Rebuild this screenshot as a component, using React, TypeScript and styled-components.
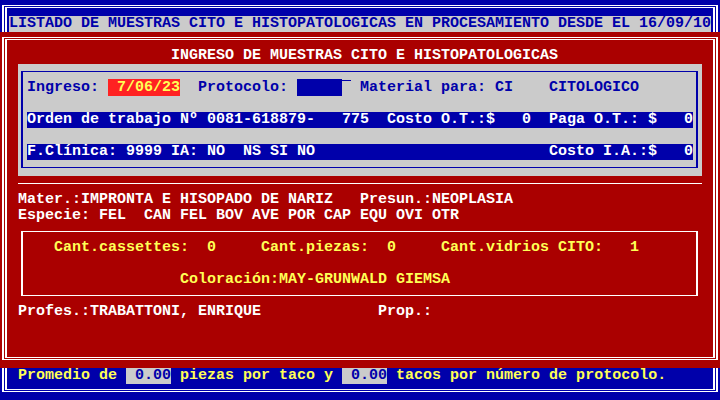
import React from 'react';
import styled, { createGlobalStyle, css } from 'styled-components';

const BLUE = '#0000aa';
const RED = '#aa0000';
const GRAY = '#cbcbcb';
const WHITE = '#ffffff';
const YELLOW = '#ffff55';
const BRIGHT_RED = '#ff2222';
const CELL = 9;

const Global = createGlobalStyle`
  html, body { margin: 0; padding: 0; background: ${BLUE}; }
  body { font-family: "Liberation Mono", "DejaVu Sans Mono", monospace; }
`;

const doubleFrame = css`
  &::before,
  &::after {
    content: '';
    position: absolute;
    pointer-events: none;
    border-style: solid;
    border-color: ${WHITE};
    border-width: 1px 2px;
  }
  &::before { left: 2px; top: 5px; right: 2px; bottom: 8px; }
  &::after { left: 5px; top: 7px; right: 5px; bottom: 10px; }
`;

const Screen = styled.div`
  position: relative;
  width: 720px;
  height: 400px;
  overflow: hidden;
  background: ${BLUE};
  display: flex;
  flex-direction: column;
  font-family: "Liberation Mono", "DejaVu Sans Mono", monospace;
  font-weight: bold;
  font-size: 15px;
  line-height: 16px;
  white-space: pre;
  ${doubleFrame}
`;

const TopBar = styled.header`
  height: 32px;
  flex-shrink: 0;
  box-sizing: border-box;
  padding: 16px 9px 0;
`;

const TitleStrip = styled.div`
  height: 16px;
  background: ${GRAY};
  color: ${BLUE};
`;

const Window = styled.section`
  position: relative;
  z-index: 1;
  height: 336px;
  flex-shrink: 0;
  box-sizing: border-box;
  padding: 16px 0;
  background: ${RED};
  display: flex;
  flex-direction: column;
  ${doubleFrame}
`;

const Row = styled.div<{ $indent?: number; $color?: string }>`
  height: 16px;
  flex-shrink: 0;
  padding-left: ${(p) => (p.$indent ?? 0) * CELL}px;
  color: ${(p) => p.$color ?? WHITE};
`;

const Panel = styled.div`
  height: 112px;
  flex-shrink: 0;
  box-sizing: border-box;
  margin: 0 18px;
  padding: 7px 4px 8px 3px;
  background: ${GRAY};
  display: flex;
`;

const LineBox = styled.div<{ $line: string }>`
  flex: 1;
  display: flex;
  flex-direction: column;
  border-style: solid;
  border-color: ${(p) => p.$line};
  border-width: 1px 2px;
  padding: 8px 3px 7px 4px;
`;

const WhiteBox = styled(LineBox)`
  flex: none;
  margin: 7px 22px 8px 21px;
`;

const Bar = styled.div`
  height: 16px;
  background: ${BLUE};
  color: ${WHITE};
`;

const Field = styled.span<{ $bg: string; $fg: string }>`
  background: ${(p) => p.$bg};
  color: ${(p) => p.$fg};
`;

const FieldTail = styled.span`
  display: inline-block;
  width: ${CELL}px;
  height: 16px;
  vertical-align: top;
  box-sizing: border-box;
  border-top: 1px solid ${BLUE};
`;

const Rule = styled.hr`
  flex-shrink: 0;
  height: 0;
  margin: 7px 18px 8px;
  border: none;
  border-top: 1px solid ${WHITE};
`;

const Filler = styled.div`
  flex: 1;
`;

const BottomBar = styled.footer`
  height: 32px;
  flex-shrink: 0;
`;

export default function App() {
  return (
    <>
      <Global />
      <Screen>
        <TopBar>
          <TitleStrip>LISTADO DE MUESTRAS CITO E HISTOPATOLOGICAS EN PROCESAMIENTO DESDE EL 16/09/10</TitleStrip>
        </TopBar>

        <Window>
          <Row $indent={19}>INGRESO DE MUESTRAS CITO E HISTOPATOLOGICAS</Row>
          <Panel>
            <LineBox $line={BLUE}>
              <Row $color={BLUE}>
                {'Ingreso: '}
                <Field $bg={BRIGHT_RED} $fg={YELLOW}>{' 7/06/23'}</Field>
                {'  Protocolo: '}
                <Field $bg={BLUE} $fg={WHITE}>{'     '}</Field>
                <FieldTail />
                {' Material para: CI    CITOLOGICO'}
              </Row>
              <Row />
              <Bar>{'Orden de trabajo Nº 0081-618879-   775  Costo O.T.:$   0  Paga O.T.: $   0'}</Bar>
              <Row />
              <Bar>{'F.Clínica: 9999 IA: NO  NS SI NO                          Costo I.A.:$   0'}</Bar>
            </LineBox>
          </Panel>
          <Rule />
          <Row $indent={2}>{'Mater.:IMPRONTA E HISOPADO DE NARIZ   Presun.:NEOPLASIA'}</Row>
          <Row $indent={2}>{'Especie: FEL  CAN FEL BOV AVE POR CAP EQU OVI OTR'}</Row>
          <WhiteBox $line={WHITE}>
            <Row $indent={3} $color={YELLOW}>
              {'Cant.cassettes:  0     Cant.piezas:  0     Cant.vidrios CITO:   1'}
            </Row>
            <Row />
            <Row $indent={17} $color={YELLOW}>{'Coloración:MAY-GRUNWALD GIEMSA'}</Row>
          </WhiteBox>
          <Row $indent={2}>{'Profes.:TRABATTONI, ENRIQUE             Prop.:'}</Row>
          <Filler />
        </Window>

        <BottomBar>
          <Row $indent={2} $color={YELLOW}>
            {'Promedio de '}
            <Field $bg={GRAY} $fg={BLUE}>{' 0.00'}</Field>
            {' piezas por taco y '}
            <Field $bg={GRAY} $fg={BLUE}>{' 0.00'}</Field>
            {' tacos por número de protocolo.'}
          </Row>
        </BottomBar>
      </Screen>
    </>
  );
}
